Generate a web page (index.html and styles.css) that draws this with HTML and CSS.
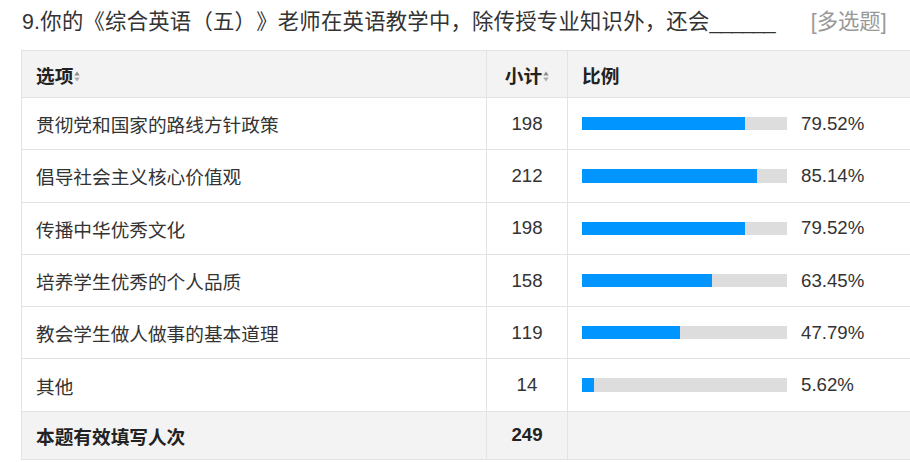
FILE: index.html
```html
<!DOCTYPE html>
<html lang="zh-CN">
<head>
<meta charset="utf-8">
<title>问卷统计</title>
<link rel="stylesheet" href="styles.css">
</head>
<body>
<div class="page">
  <div class="q-title"><span class="q-text">9.你的《综合英语（五）》老师在英语教学中，除传授专业知识外，还会</span><span class="blank">______</span><span class="q-type">[多选题]</span></div>
  <div class="table-wrap">
    <table class="stat">
      <colgroup>
        <col class="c-opt">
        <col class="c-cnt">
        <col class="c-pct">
      </colgroup>
      <thead>
        <tr>
          <th class="opt">选项<svg class="sort" width="6" height="11" viewBox="0 0 6 11"><path d="M3 0.5 L5.8 4.5 L0.2 4.5 Z" fill="#8e8e8e"/><path d="M3 10.5 L5.8 6.5 L0.2 6.5 Z" fill="#adadad"/></svg></th>
          <th class="cnt">小计<svg class="sort" width="6" height="11" viewBox="0 0 6 11"><path d="M3 0.5 L5.8 4.5 L0.2 4.5 Z" fill="#8e8e8e"/><path d="M3 10.5 L5.8 6.5 L0.2 6.5 Z" fill="#adadad"/></svg></th>
          <th class="pct">比例</th>
        </tr>
      </thead>
      <tbody>
        <tr>
          <td class="opt">贯彻党和国家的路线方针政策</td>
          <td class="cnt">198</td>
          <td class="pct"><div class="bar-cell"><div class="bar"><div class="fill" style="width:79.52%"></div></div><span class="val">79.52%</span></div></td>
        </tr>
        <tr>
          <td class="opt">倡导社会主义核心价值观</td>
          <td class="cnt">212</td>
          <td class="pct"><div class="bar-cell"><div class="bar"><div class="fill" style="width:85.14%"></div></div><span class="val">85.14%</span></div></td>
        </tr>
        <tr>
          <td class="opt">传播中华优秀文化</td>
          <td class="cnt">198</td>
          <td class="pct"><div class="bar-cell"><div class="bar"><div class="fill" style="width:79.52%"></div></div><span class="val">79.52%</span></div></td>
        </tr>
        <tr>
          <td class="opt">培养学生优秀的个人品质</td>
          <td class="cnt">158</td>
          <td class="pct"><div class="bar-cell"><div class="bar"><div class="fill" style="width:63.45%"></div></div><span class="val">63.45%</span></div></td>
        </tr>
        <tr>
          <td class="opt">教会学生做人做事的基本道理</td>
          <td class="cnt">119</td>
          <td class="pct"><div class="bar-cell"><div class="bar"><div class="fill" style="width:47.79%"></div></div><span class="val">47.79%</span></div></td>
        </tr>
        <tr>
          <td class="opt">其他</td>
          <td class="cnt">14</td>
          <td class="pct"><div class="bar-cell"><div class="bar"><div class="fill" style="width:5.62%"></div></div><span class="val">5.62%</span></div></td>
        </tr>
      </tbody>
      <tfoot>
        <tr>
          <td class="opt">本题有效填写人次</td>
          <td class="cnt">249</td>
          <td class="pct"></td>
        </tr>
      </tfoot>
    </table>
  </div>
</div>
</body>
</html>
```

FILE: styles.css
```css
html, body {
  margin: 0;
  padding: 0;
  background: #fff;
  overflow: hidden;
}

body {
  font-family: "Liberation Sans", "Noto Sans CJK SC", sans-serif;
  color: #333;
  width: 910px;
  height: 462px;
  font-feature-settings: "chws" 0, "halt" 0, "palt" 0;
  font-kerning: none;
  text-spacing-trim: space-all;
}

.page {
  padding: 7px 0 0 21px;
}

.q-title {
  font-size: 21.33px;
  line-height: 30px;
  height: 30px;
  padding-left: 1px;
  white-space: nowrap;
  color: #333;
}

.q-text {
  letter-spacing: 0.26px;
}

.blank {
  letter-spacing: -1px;
}

.q-type {
  color: #999;
  margin-left: 36px;
}

.table-wrap {
  margin-top: 13px;
  width: 889px;
  overflow: hidden;
}

.stat {
  border-collapse: collapse;
  table-layout: fixed;
  width: 1000px;
  font-size: 18.67px;
}

.c-opt { width: 465px; }
.c-cnt { width: 81px; }

.stat th,
.stat td {
  border: 1px solid #e3e3e3;
  padding: 0 14px;
  text-align: left;
  white-space: nowrap;
}

.stat thead th {
  background: #f3f3f3;
  height: 46px;
  font-weight: bold;
  color: #222;
}

.stat tbody td {
  height: 51.3px;
}

.stat tfoot td {
  background: #f3f3f3;
  height: 47px;
  font-weight: bold;
  color: #222;
}

.stat .cnt {
  text-align: center;
  padding: 0;
}

.sort {
  display: inline-block;
  vertical-align: middle;
  margin-left: 1px;
  margin-top: -3px;
}

.bar-cell {
  display: flex;
  align-items: center;
}

.bar {
  width: 205px;
  height: 13.33px;
  background: #dddddd;
  flex: none;
}

.fill {
  height: 100%;
  background: #0095ff;
}

.val {
  margin-left: 14px;
}
```
